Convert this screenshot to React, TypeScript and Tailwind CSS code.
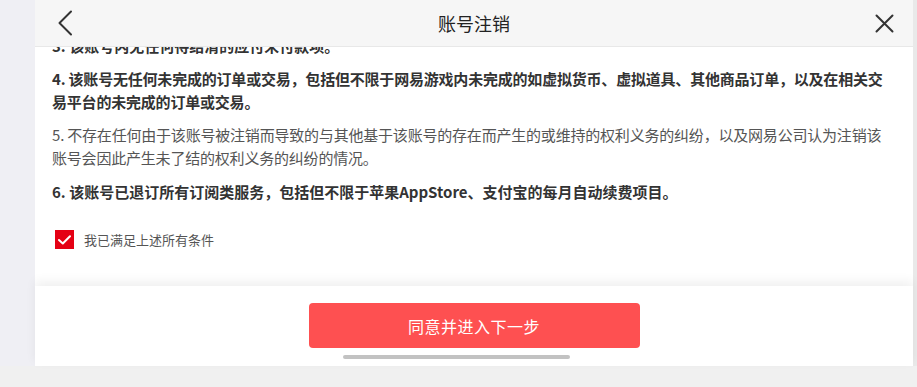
const cjk = { fontFamily: '"Noto Sans CJK SC", "Noto Sans", sans-serif' };

function BackIcon() {
  return (
    <svg width="16" height="26" viewBox="0 0 16 26" fill="none">
      <path d="M14 1.5 L2.5 13 L14 24.5" stroke="#333" strokeWidth="2" strokeLinecap="round" strokeLinejoin="round" />
    </svg>
  );
}

function CloseIcon() {
  return (
    <svg width="19" height="19" viewBox="0 0 19 19" fill="none">
      <path d="M1.5 1.5 L17.5 17.5 M17.5 1.5 L1.5 17.5" stroke="#333" strokeWidth="2" strokeLinecap="round" />
    </svg>
  );
}

function CheckBox() {
  return (
    <div className="w-[19px] h-[19px] bg-[#e50014] flex items-center justify-center">
      <svg width="13" height="10" viewBox="0 0 13 10" fill="none">
        <path d="M1 5 L4.8 8.5 L12 1.2" stroke="#fff" strokeWidth="2" strokeLinecap="round" strokeLinejoin="round" />
      </svg>
    </div>
  );
}

export default function App() {
  return (
    <div className="w-[917px] h-[387px] flex flex-col bg-[#f0f0f0] overflow-hidden" style={cjk}>
      <div className="flex h-[366px]">
        <div className="w-[35px] bg-[#efeff4]" />

        <div className="flex-1 flex flex-col bg-white">
          {/* header */}
          <header className="relative h-[47px] shrink-0 bg-[#f6f6f6] border-b border-[#e8e8e8] flex items-center justify-between pl-[22px] pr-[19px] z-10">
            <BackIcon />
            <h1 className="absolute left-0 right-0 text-center text-[18px] text-[#222] leading-none pointer-events-none">
              账号注销
            </h1>
            <CloseIcon />
          </header>

          {/* scrolled content */}
          <div className="flex-1 overflow-hidden relative">
            <div className="pl-[17px] pr-[21px] mt-[-13px] text-[15px] leading-[23px] text-[#333] break-all">
              <p className="font-bold mb-[10px]">3. 该账号内无任何待结清的应付未付款项。</p>
              <p className="font-bold mb-[10px] tracking-[-0.2px]">
                4. 该账号无任何未完成的订单或交易，包括但不限于网易游戏内未完成的如虚拟货币、虚拟道具、其他商品订单，以及在相关交易平台的未完成的订单或交易。
              </p>
              <p className="mb-[11px] text-[#555] tracking-[-0.2px]">
                5. 不存在任何由于该账号被注销而导致的与其他基于该账号的存在而产生的或维持的权利义务的纠纷，以及网易公司认为注销该账号会因此产生未了结的权利义务的纠纷的情况。
              </p>
              <p className="font-bold">6. 该账号已退订所有订阅类服务，包括但不限于苹果AppStore、支付宝的每月自动续费项目。</p>

              <div className="flex items-center gap-[10px] mt-[25px] pl-[3px]">
                <CheckBox />
                <span className="text-[13px] text-[#555]">我已满足上述所有条件</span>
              </div>
            </div>
          </div>

          {/* footer */}
          <footer className="relative h-[80px] shrink-0 bg-white shadow-[0_-5px_10px_rgba(0,0,0,0.06)] flex justify-center pt-[17px]">
            <button className="w-[331px] h-[45px] rounded-[4px] bg-[#fe5051] text-white text-[16px] tracking-[0.5px]">
              同意并进入下一步
            </button>
            <div className="absolute left-[308px] top-[69px] w-[227px] h-[4px] rounded-full bg-[#c2c2c2]" />
          </footer>
        </div>

        <div className="w-[4px] bg-[#e9e9e9]" />
      </div>
      <div className="flex-1 bg-[#f0f0f0]" />
    </div>
  );
}
